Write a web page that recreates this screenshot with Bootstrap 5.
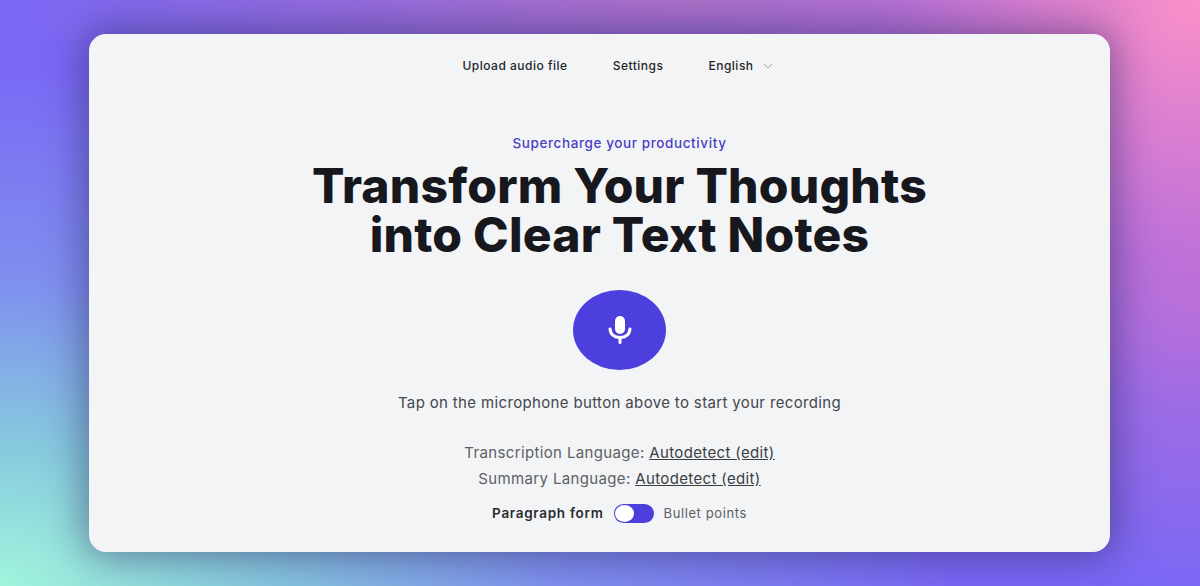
<!DOCTYPE html>
<html lang="en">
<head>
<meta charset="utf-8">
<title>Transform Your Thoughts</title>
<link href="https://cdn.jsdelivr.net/npm/bootstrap@5.3.0/dist/css/bootstrap.min.css" rel="stylesheet">
<style>
html, body { height: 100%; }
body {
  font-family: Inter, "Liberation Sans", sans-serif;
  overflow: hidden;
  padding: 34px 90px 34px 89px;
  background-color: #7a68f5;
  background-image:
    radial-gradient(ellipse 480px 400px at 100% 0%, #fb90c8 0%, rgba(232,130,205,.8) 35%, rgba(200,115,215,.5) 65%, rgba(190,110,220,0) 100%),
    radial-gradient(ellipse 950px 520px at 0% 100%, #a0f4dc 0%, rgba(135,210,220,.9) 28%, rgba(130,165,235,.65) 58%, rgba(125,130,240,0) 100%),
    radial-gradient(ellipse 300px 330px at 100% 45%, #b86ed8 0%, rgba(184,110,216,0) 100%),
    radial-gradient(ellipse 700px 130px at 58% 0%, #ae70c8 0%, rgba(174,112,200,0) 100%);
}
.panel {
  height: 100%;
  padding-left: 40px;
  background: #f2f4f5;
  border-radius: 17px;
  box-shadow: 0 0 38px 5px rgba(40,35,90,.5);
}
.topnav { gap: 45px; padding: 23px 4px 0 0; height: 62px; font-size: 12px; letter-spacing: .5px; font-weight: 500; color: #24262b; line-height: 17px; }
.caret { width: 10px; height: 6px; margin-left: 9px; }
.eyebrow { font-size: 13.5px; letter-spacing: .6px; font-weight: 500; color: #4a3fc4; margin-top: 38px; line-height: 18px; }
.headline { font-size: 48px; font-weight: 800; letter-spacing: .22px; line-height: 49px; color: #16181d; margin: 9px 0 31px; }
.micbtn { width: 93px; height: 80px; background: #4c3fdd; border: 0; border-radius: 50%; padding: 0; }
.hint { font-size: 15px; letter-spacing: .35px; color: #44474d; margin: 23px 0 0; line-height: 20px; }
.langs { font-size: 15px; letter-spacing: .36px; color: #5d6066; margin-top: 27px; line-height: 26px; }
.langs a { color: #3b3e44; }
.modes { gap: 10px; margin-top: 11px; font-size: 13px; letter-spacing: .6px; line-height: 20px; color: #5d6066; }
.modes strong { font-size: 13.5px; letter-spacing: .7px; font-weight: 600; color: #2a2c32; }
.toggle { width: 40px; height: 19px; border-radius: 10px; background: #4c3fdd; padding: 2px; }
.knob { width: 19px; height: 17px; margin-left: -1px; border-radius: 50%; background: #fff; }
</style>
</head>
<body>
<main class="panel text-center">
  <nav class="topnav d-flex justify-content-center align-items-start">
    <span>Upload audio file</span>
    <span>Settings</span>
    <span class="d-flex align-items-center">English
      <svg class="caret" viewBox="0 0 10 6" fill="none" stroke="#9a9da3" stroke-width="1"><path d="M1 1l4 4 4-4"/></svg>
    </span>
  </nav>
  <p class="eyebrow mb-0">Supercharge your productivity</p>
  <h1 class="headline">Transform Your Thoughts<br>into Clear Text Notes</h1>
  <button class="micbtn d-inline-flex align-items-center justify-content-center" type="button" aria-label="Record">
    <svg width="26" height="30" viewBox="0 0 26 30" fill="none">
      <rect x="8" y="1" width="10" height="18" rx="5" fill="#fff"/>
      <path d="M3 14c.5 5.500 4.500 8.500 10 8.500s9.500-3 10-8.500" stroke="#fff" stroke-width="3" stroke-linecap="round"/>
      <path d="M13 22.500v5" stroke="#fff" stroke-width="3" stroke-linecap="round"/>
    </svg>
  </button>
  <p class="hint">Tap on the microphone button above to start your recording</p>
  <div class="langs">
    <div>Transcription Language: <a href="#">Autodetect (edit)</a></div>
    <div>Summary Language: <a href="#">Autodetect (edit)</a></div>
  </div>
  <div class="modes d-flex justify-content-center align-items-center">
    <strong>Paragraph form</strong>
    <span class="toggle d-flex align-items-center"><span class="knob"></span></span>
    <span>Bullet points</span>
  </div>
</main>
<script src="https://cdn.jsdelivr.net/npm/bootstrap@5.3.0/dist/js/bootstrap.bundle.min.js"></script>
</body>
</html>
